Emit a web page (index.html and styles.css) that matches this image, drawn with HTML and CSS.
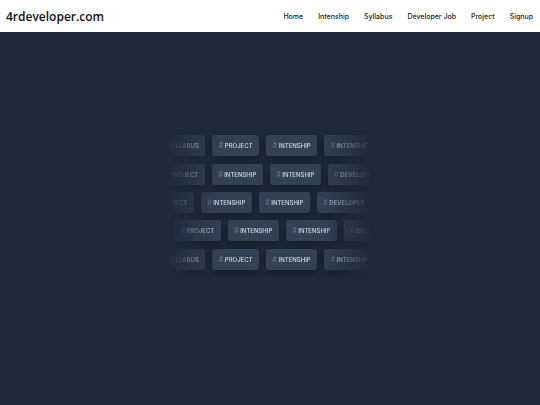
FILE: index.html
```html
<!DOCTYPE html>
<html lang="en">
<head>
<meta charset="utf-8">
<title>4rdeveloper.com</title>
<link rel="stylesheet" href="styles.css">
</head>
<body>
<header class="nav">
  <a class="logo" href="#">4rdeveloper.com</a>
  <nav class="links">
    <a href="#">Home</a>
    <a href="#">Intenship</a>
    <a href="#">Syllabus</a>
    <a href="#">Developer Job</a>
    <a href="#">Project</a>
    <a href="#">Signup</a>
  </nav>
</header>
<main class="main">
  <div class="cloud">
    <div class="row row-a">
      <span class="tag"><i>#</i> SYLLABUS</span>
      <span class="tag"><i>#</i> PROJECT</span>
      <span class="tag"><i>#</i> INTENSHIP</span>
      <span class="tag"><i>#</i> INTENSHIP</span>
      <span class="tag"><i>#</i> DEVELOPER</span>
    </div>
    <div class="row row-b">
      <span class="tag"><i>#</i> PROJECT</span>
      <span class="tag"><i>#</i> INTENSHIP</span>
      <span class="tag"><i>#</i> INTENSHIP</span>
      <span class="tag"><i>#</i> DEVELOPER</span>
      <span class="tag"><i>#</i> SYLLABUS</span>
    </div>
    <div class="row row-c">
      <span class="tag"><i>#</i> PROJECT</span>
      <span class="tag"><i>#</i> INTENSHIP</span>
      <span class="tag"><i>#</i> INTENSHIP</span>
      <span class="tag"><i>#</i> DEVELOPER</span>
      <span class="tag"><i>#</i> SYLLABUS</span>
    </div>
    <div class="row row-d">
      <span class="tag"><i>#</i> PROJECT</span>
      <span class="tag"><i>#</i> INTENSHIP</span>
      <span class="tag"><i>#</i> INTENSHIP</span>
      <span class="tag"><i>#</i> DEVELOPER</span>
      <span class="tag"><i>#</i> SYLLABUS</span>
    </div>
    <div class="row row-a">
      <span class="tag"><i>#</i> SYLLABUS</span>
      <span class="tag"><i>#</i> PROJECT</span>
      <span class="tag"><i>#</i> INTENSHIP</span>
      <span class="tag"><i>#</i> INTENSHIP</span>
      <span class="tag"><i>#</i> DEVELOPER</span>
    </div>
  </div>
</main>
</body>
</html>
```
FILE: styles.css
```css
* { box-sizing: border-box; margin: 0; padding: 0; }
html, body { height: 100%; }
body {
  background: #1e293b;
  font-family: "Inter", "Noto Sans", sans-serif;
  display: flex;
  flex-direction: column;
}
a { text-decoration: none; color: inherit; }
.nav {
  height: 32px;
  background: #ffffff;
  display: flex;
  align-items: center;
  justify-content: space-between;
  padding: 0 7px 0 6px;
  flex: none;
}
.logo {
  font-family: "Open Sans", sans-serif;
  font-weight: 600;
  font-size: 12px;
  color: #111111;
}
.links {
  display: flex;
  gap: 15px;
  font-size: 7px;
  font-weight: 500;
  color: #222222;
}
.main {
  flex: 1;
  display: flex;
  align-items: center;
  justify-content: center;
  padding-bottom: 32px;
}
.cloud {
  width: 204px;
  display: flex;
  flex-direction: column;
  gap: 7.3px;
  overflow: hidden;
  -webkit-mask-image: linear-gradient(to right, transparent 0%, #000 25%, #000 75%, transparent 100%);
  mask-image: linear-gradient(to right, transparent 0%, #000 25%, #000 75%, transparent 100%);
  padding: 8px 0;
}
.row {
  display: flex;
  gap: 7px;
  white-space: nowrap;
}
.row-a { margin-left: -13px; }
.row-b { margin-left: -10px; }
.row-c { margin-left: -21px; }
.row-d { margin-left: 6px; }
.tag {
  flex: none;
  height: 21px;
  display: flex;
  align-items: center;
  padding: 0 6.5px;
  background: #334155;
  border-radius: 3px;
  color: #d6dde8;
  font-size: 6px;
  font-weight: 500;
  box-shadow: 0 3px 8px rgba(0, 0, 0, 0.35);
}
.tag i {
  font-style: normal;
  color: #64748b;
  font-size: 7px;
  margin-right: 1.5px;
}
```
